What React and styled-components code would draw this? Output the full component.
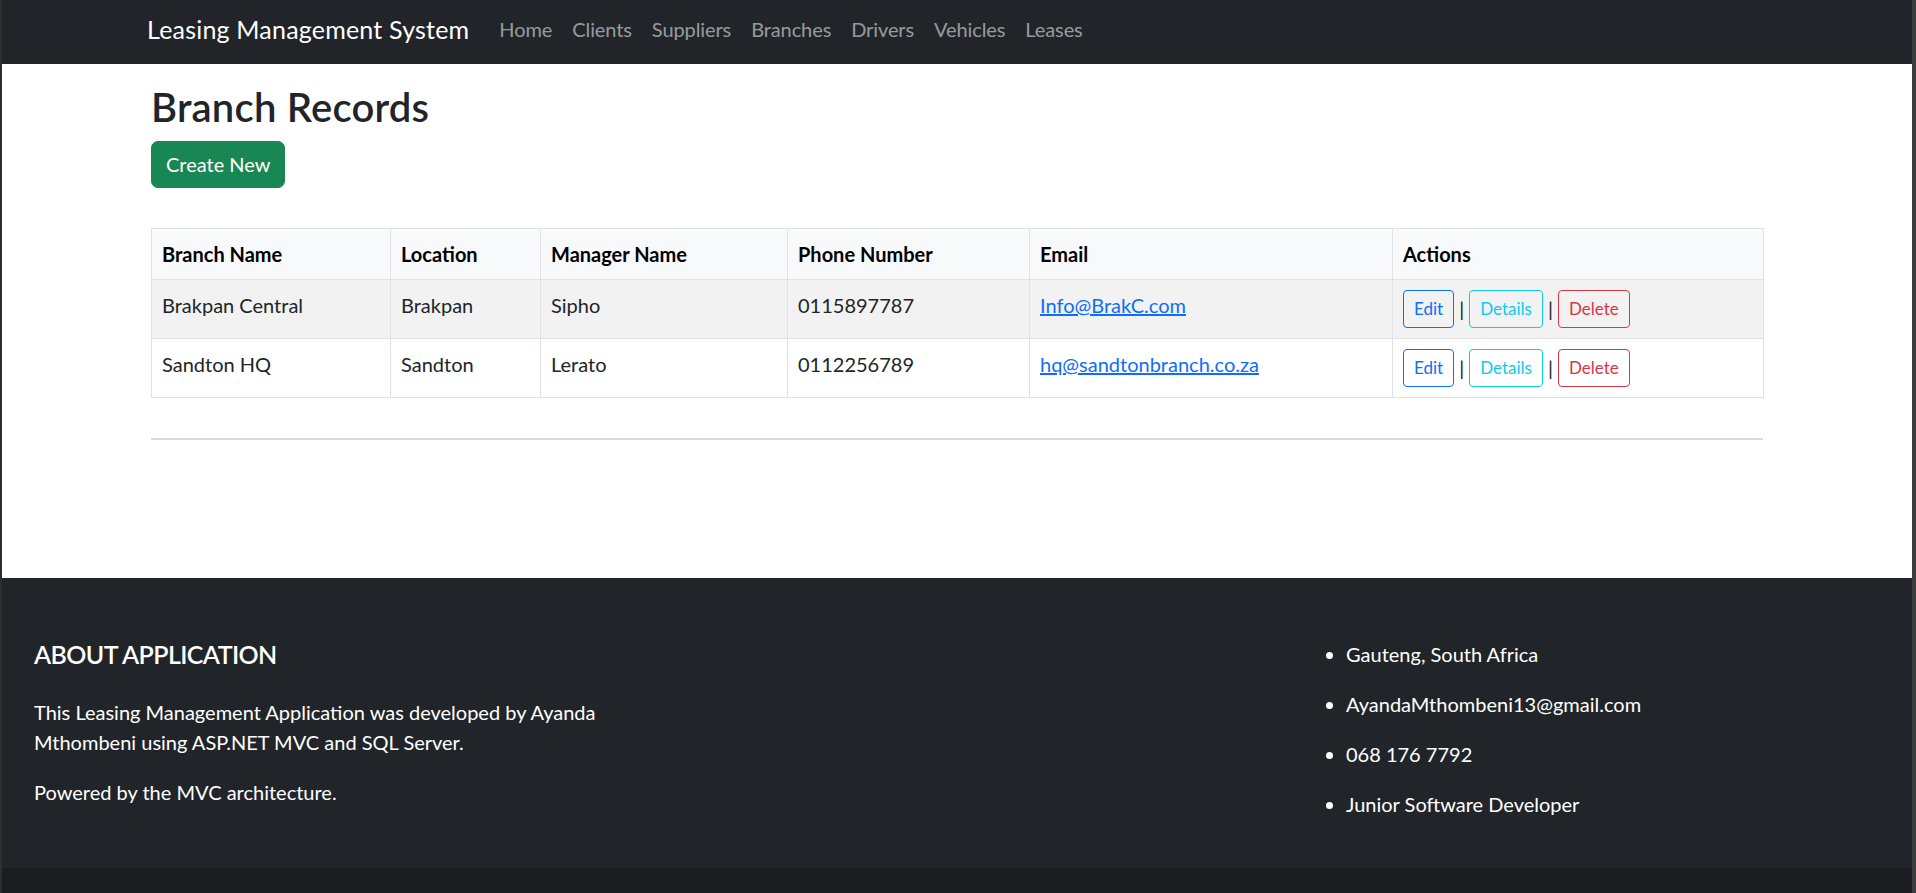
import React from "react";
import styled, { createGlobalStyle } from "styled-components";

const GlobalStyle = createGlobalStyle`
  *, *::before, *::after {
    box-sizing: border-box;
  }
  html, body {
    margin: 0;
    padding: 0;
  }
  body {
    font-family: "Segoe UI", Lato, "Liberation Sans", Arial, sans-serif;
    font-size: 20px;
    line-height: 30px;
    color: #212529;
    background: #1c1d21;
    border-left: 2px solid #2e2e2e;
    border-right: 4px solid #3c3c3c;
    min-height: 100vh;
  }
`;

const Navbar = styled.nav`
  background: #212529;
  height: 64px;
`;

const NavInner = styled.div`
  width: 1620px;
  height: 100%;
  margin: 0 auto;
  padding-bottom: 7px;
  display: flex;
  align-items: center;
`;

const Brand = styled.a`
  color: #fff;
  font-size: 25px;
  line-height: 30px;
  letter-spacing: 0.2px;
  margin-right: 20px;
  text-decoration: none;
`;

const NavList = styled.ul`
  display: flex;
  list-style: none;
  margin: 0;
  padding: 0;
`;

const NavLink = styled.a`
  display: block;
  padding: 0 10px;
  color: rgba(255, 255, 255, 0.55);
  font-size: 20px;
  letter-spacing: -0.1px;
  text-decoration: none;
`;

const Main = styled.main`
  background: #fff;
  min-height: 514px;
  padding-top: 19px;
`;

const Container = styled.div`
  width: 1612px;
  margin: 0 auto;
`;

const Title = styled.h2`
  font-size: 40px;
  line-height: 48px;
  font-weight: 600;
  letter-spacing: 0.2px;
  margin: 0 0 10px;
  color: #212529;
`;

const ButtonRow = styled.div`
  height: 47px;
  margin-bottom: 40px;
`;

const CreateButton = styled.a`
  display: inline-block;
  background: #198754;
  border: 1px solid #198754;
  border-radius: 7px;
  color: #fff;
  padding: 7px 14px 8px;
  font-size: 20px;
  line-height: 30px;
  text-decoration: none;
`;

const Table = styled.table`
  width: 1612px;
  border-collapse: collapse;
  table-layout: fixed;
  margin-bottom: 40px;
`;

const Th = styled.th`
  text-align: left;
  padding: 10px;
  border: 1px solid #dee2e6;
  background: #f8f9fa;
  color: #000;
  font-weight: 700;
  line-height: 30px;
  vertical-align: top;
`;

const Td = styled.td`
  padding: 10px;
  border: 1px solid #dee2e6;
  line-height: 30px;
  vertical-align: top;
  background: ${(p) => (p.$striped ? "#f2f2f2" : "#fff")};
`;

const MailLink = styled.a`
  color: #0d6efd;
  text-decoration: underline;
`;

const Actions = styled.div`
  display: flex;
  align-items: center;
  gap: 5px;
  height: 38px;
`;

const Sep = styled.span`
  font-size: 20px;
  line-height: 1;
  color: #212529;
`;

const ActionButton = styled.a`
  display: inline-block;
  padding: 5px 10px;
  font-size: 17px;
  line-height: 26px;
  border: 1px solid ${(p) => p.$color};
  border-radius: 4px;
  color: ${(p) => p.$color};
  text-decoration: none;
`;

const Divider = styled.hr`
  margin: 0;
  border: 0;
  border-top: 2px solid #d9d9d9;
`;

const Footer = styled.footer`
  background: #212529;
  color: #fff;
  height: 290px;
  padding: 61px 0 0 32px;
  display: grid;
  grid-template-columns: repeat(3, 1fr);
  column-gap: 30px;
  align-items: start;
`;

const FooterTitle = styled.h5`
  font-size: 25px;
  line-height: 30px;
  font-weight: 600;
  letter-spacing: -0.6px;
  margin: 0 0 28px;
`;

const FooterText = styled.p`
  margin: 0 0 20px;
`;

const ContactList = styled.ul`
  margin: 0;
  padding-left: 40px;

  & > li {
    margin-bottom: 20px;
  }
`;

const links = ["Home", "Clients", "Suppliers", "Branches", "Drivers", "Vehicles", "Leases"];

const columns = [
  { label: "Branch Name", width: 239 },
  { label: "Location", width: 150 },
  { label: "Manager Name", width: 247 },
  { label: "Phone Number", width: 242 },
  { label: "Email", width: 363 },
  { label: "Actions", width: 371 },
];

const branches = [
  { name: "Brakpan Central", location: "Brakpan", manager: "Sipho", phone: "0115897787", email: "Info@BrakC.com" },
  { name: "Sandton HQ", location: "Sandton", manager: "Lerato", phone: "0112256789", email: "hq@sandtonbranch.co.za" },
];

const App = () => {
  return (
    <>
      <GlobalStyle />
      <Navbar>
        <NavInner>
          <Brand href="#">Leasing Management System</Brand>
          <NavList>
            {links.map((l) => (
              <li key={l}>
                <NavLink href="#">{l}</NavLink>
              </li>
            ))}
          </NavList>
        </NavInner>
      </Navbar>
      <Main>
        <Container>
          <Title>Branch Records</Title>
          <ButtonRow>
            <CreateButton href="#">Create New</CreateButton>
          </ButtonRow>
          <Table>
            <colgroup>
              {columns.map((c) => (
                <col key={c.label} style={{ width: c.width }} />
              ))}
            </colgroup>
            <thead>
              <tr>
                {columns.map((c) => (
                  <Th key={c.label}>{c.label}</Th>
                ))}
              </tr>
            </thead>
            <tbody>
              {branches.map((b, i) => (
                <tr key={b.name}>
                  <Td $striped={i % 2 === 0}>{b.name}</Td>
                  <Td $striped={i % 2 === 0}>{b.location}</Td>
                  <Td $striped={i % 2 === 0}>{b.manager}</Td>
                  <Td $striped={i % 2 === 0}>{b.phone}</Td>
                  <Td $striped={i % 2 === 0}>
                    <MailLink href="#">{b.email}</MailLink>
                  </Td>
                  <Td $striped={i % 2 === 0}>
                    <Actions>
                      <ActionButton href="#" $color="#0d6efd">Edit</ActionButton>
                      <Sep>|</Sep>
                      <ActionButton href="#" $color="#0dcaf0">Details</ActionButton>
                      <Sep>|</Sep>
                      <ActionButton href="#" $color="#dc3545">Delete</ActionButton>
                    </Actions>
                  </Td>
                </tr>
              ))}
            </tbody>
          </Table>
          <Divider />
        </Container>
      </Main>
      <Footer>
        <div>
          <FooterTitle>ABOUT APPLICATION</FooterTitle>
          <FooterText>
            This Leasing Management Application was developed by Ayanda Mthombeni using ASP.NET MVC and SQL Server.
          </FooterText>
          <FooterText>Powered by the MVC architecture.</FooterText>
        </div>
        <div />
        <ContactList>
          <li>Gauteng, South Africa</li>
          <li>AyandaMthombeni13@gmail.com</li>
          <li>068 176 7792</li>
          <li>Junior Software Developer</li>
        </ContactList>
      </Footer>
    </>
  );
};

export default App;
